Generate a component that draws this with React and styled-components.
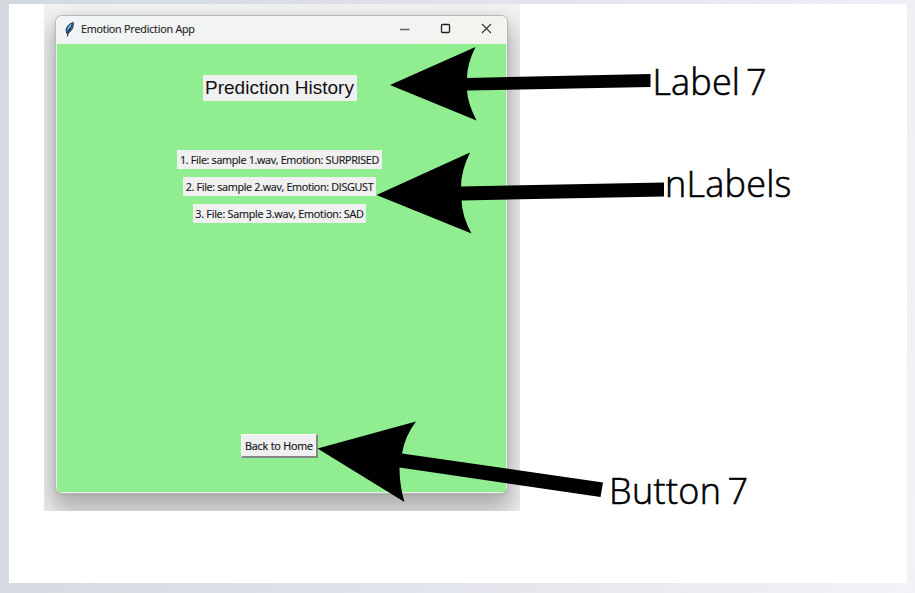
import React from 'react';
import styled, { createGlobalStyle } from 'styled-components';

const GlobalStyle = createGlobalStyle`
  * { box-sizing: border-box; }
  body { margin: 0; overflow: hidden; }
`;

const Backdrop = styled.main`
  width: 915px;
  height: 593px;
  padding: 4px 8px 10px 9px;
  background: linear-gradient(100deg, #d3d9de 0%, #dce0e6 35%, #e6e8ee 65%, #f2f3f8 100%);
`;

const Slide = styled.section`
  position: relative;
  height: 579px;
  padding-left: 35px;
  background: #fff;
`;

const Capture = styled.div`
  width: 476px;
  height: 507px;
  padding: 11px 12px 17px 11px;
  overflow: hidden;
  background: #f3f3f3;
`;

const AppWindow = styled.div`
  display: flex;
  flex-direction: column;
  width: 453px;
  height: 479px;
  border: 1px solid #b9bab9;
  border-radius: 7px;
  overflow: hidden;
  background: #e9ece9;
  box-shadow: 0 14px 24px 5px rgba(0, 0, 0, 0.27), 0 1px 4px rgba(0, 0, 0, 0.1);
`;

const TitleBar = styled.header`
  display: flex;
  align-items: center;
  height: 28px;
  flex: none;
  padding-left: 8px;
  background: linear-gradient(90deg, #f0f4f4, #f4f3f0);
`;

const AppTitle = styled.span`
  flex: 1;
  margin: -2px 0 0 5px;
  font: 10.8px/16px 'Open Sans', sans-serif;
  letter-spacing: -0.24px;
  color: #222;
  -webkit-text-stroke: 0.15px #222;
`;

const WindowControls = styled.svg`
  flex: none;
  width: 120px;
  height: 28px;
`;

const Body = styled.div`
  display: flex;
  flex-direction: column;
  align-items: center;
  width: 449px;
  height: 448px;
  margin-left: 1px;
  padding: 31px 4px 0 0;
  background: #90ee90;
`;

const Heading = styled.h1`
  width: 154px;
  height: 26px;
  margin: 0 0 49px;
  font: 19px/26px 'Liberation Sans', Arial, sans-serif;
  letter-spacing: 0;
  text-align: center;
  white-space: nowrap;
  color: #111;
  background: #f0f0f0;
`;

const HistoryList = styled.ul`
  display: flex;
  flex-direction: column;
  align-items: center;
  gap: 8px;
  height: 284px;
  margin: 0;
  padding: 0;
  list-style: none;
`;

const HistoryItem = styled.li`
  width: ${(p) => p.$width}px;
  height: 19px;
  font: 10.8px/19px 'Open Sans', sans-serif;
  letter-spacing: ${(p) => p.$tracking}px;
  text-align: center;
  white-space: nowrap;
  color: #151515;
  background: #f0f0f0;
  -webkit-text-stroke: 0.15px #151515;
`;

const BackButton = styled.button`
  width: 77px;
  height: 24px;
  padding: 0;
  border: 1px solid;
  border-color: #fbfbfb #858585 #858585 #fbfbfb;
  border-right-width: 2px;
  border-bottom-width: 2px;
  font: 10.8px/20px 'Open Sans', sans-serif;
  letter-spacing: -0.2px;
  white-space: nowrap;
  color: #151515;
  background: #f0f0f0;
  -webkit-text-stroke: 0.2px #151515;
`;

const Arrows = styled.svg`
  position: absolute;
  left: -9px;
  top: -4px;
  width: 915px;
  height: 593px;
  pointer-events: none;
`;

const Callout = styled.span`
  position: absolute;
  left: ${(p) => p.$x}px;
  top: ${(p) => p.$y}px;
  font: 300 36px/48px 'Open Sans', sans-serif;
  letter-spacing: ${(p) => p.$tracking}px;
  word-spacing: -3.5px;
  white-space: nowrap;
  color: #000;
  -webkit-text-stroke: 0.6px #000;
`;

const entries = [
  { text: '1. File: sample 1.wav, Emotion: SURPRISED', width: 205, tracking: -0.33 },
  { text: '2. File: sample 2.wav, Emotion: DISGUST', width: 193, tracking: -0.33 },
  { text: '3. File: Sample 3.wav, Emotion: SAD', width: 173, tracking: -0.26 },
];

const callouts = [
  { text: 'Label 7', x: 643.5, y: 54, tracking: 0.15 },
  { text: 'nLabels', x: 656, y: 156, tracking: 0.25 },
  { text: 'Button 7', x: 600, y: 463, tracking: 0.35 },
];

function Feather() {
  return (
    <svg width="12" height="16" viewBox="0 0 12 16">
      <path d="M9.4 .6C6 1 2.900 4 2 7.800L2.700 11.400C6.300 10.500 8.800 7.500 9.200 3.800Z" fill="#3f74ad" stroke="#17202b" strokeWidth=".8" />
      <path d="M8 2.500C5.800 6 4.200 9 3.300 14.300" fill="none" stroke="#17202b" strokeWidth="1.100" />
      <path d="M7.200 2.500L4 6.800" stroke="#8cc1ee" strokeWidth="1.400" />
    </svg>
  );
}

export default function App() {
  return (
    <>
      <GlobalStyle />
      <Backdrop>
        <Slide>
          <Capture>
            <AppWindow>
              <TitleBar>
                <Feather />
                <AppTitle>Emotion Prediction App</AppTitle>
                <WindowControls viewBox="0 0 120 28" fill="none">
                  <path d="M13 13.500H22.500" stroke="#666" strokeWidth="1.300" />
                  <rect x="54.500" y="8.500" width="8" height="8" rx="1" stroke="#222" strokeWidth="1.300" />
                  <path d="M95 8L104 17M104 8L95 17" stroke="#333" strokeWidth="1.100" />
                </WindowControls>
              </TitleBar>
              <Body>
                <Heading>Prediction History</Heading>
                <HistoryList>
                  {entries.map((e) => (
                    <HistoryItem key={e.text} $width={e.width} $tracking={e.tracking}>{e.text}</HistoryItem>
                  ))}
                </HistoryList>
                <BackButton type="button">Back to Home</BackButton>
              </Body>
            </AppWindow>
          </Capture>
          <Arrows viewBox="0 0 915 593">
            <path d="M390 85L475.500 47Q467 64 467 78L650.500 74V87L467 90.500Q467.500 103 476.500 120.500Z" />
            <path d="M376.500 195L470 152.500Q461 171 461 186.500L664 182.500V196.500L461.500 200.500Q462 216 471.500 233.500Z" />
            <path d="M317.500 448.500L416 421.500Q405 436 402 453.500L603 482.500L600.500 497L399.500 467.500Q399.500 486 404.500 502Z" />
          </Arrows>
          {callouts.map((c) => (
            <Callout key={c.text} $x={c.x} $y={c.y} $tracking={c.tracking}>{c.text}</Callout>
          ))}
        </Slide>
      </Backdrop>
    </>
  );
}
